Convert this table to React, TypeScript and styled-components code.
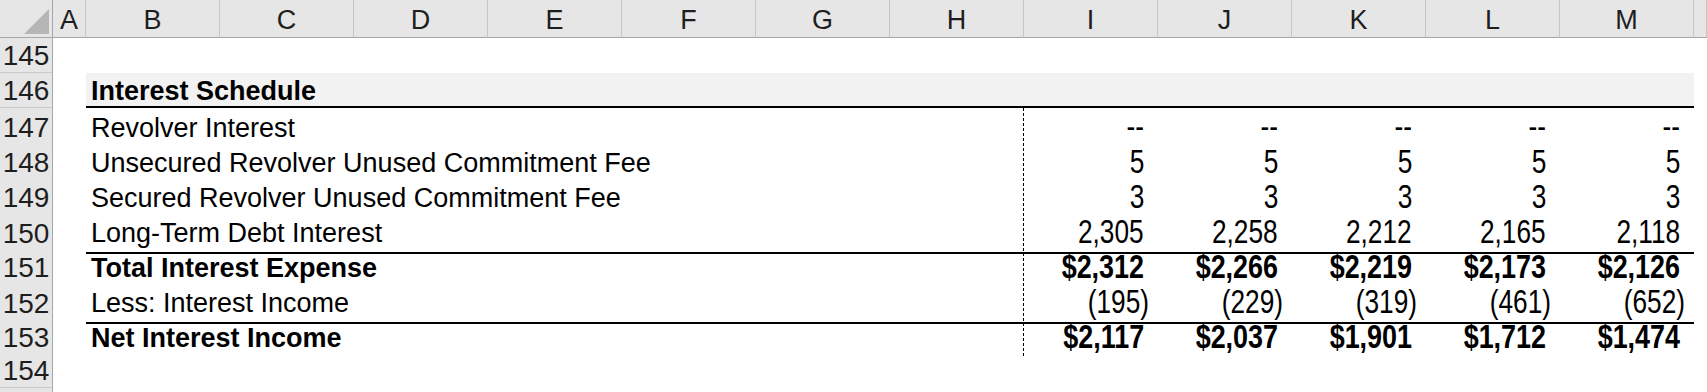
import { FC } from "react";
import styled, { createGlobalStyle } from "styled-components";

const GlobalStyle = createGlobalStyle`
  html, body {
    margin: 0;
    padding: 0;
    background: #ffffff;
    overflow: hidden;
  }
  * {
    box-sizing: border-box;
  }
`;

const COLUMNS = ["A", "B", "C", "D", "E", "F", "G", "H", "I", "J", "K", "L", "M", ""];

type RowData = {
  n: number;
  hideNumber?: boolean;
  label?: string;
  bold?: boolean;
  band?: boolean;
  rule?: boolean;
  values?: string[];
};

const ROWS: RowData[] = [
  { n: 145 },
  { n: 146, label: "Interest Schedule", bold: true, band: true },
  { n: 147, label: "Revolver Interest", values: ["--", "--", "--", "--", "--"] },
  { n: 148, label: "Unsecured Revolver Unused Commitment Fee", values: ["5", "5", "5", "5", "5"] },
  { n: 149, label: "Secured Revolver Unused Commitment Fee", values: ["3", "3", "3", "3", "3"] },
  { n: 150, label: "Long-Term Debt Interest", rule: true, values: ["2,305", "2,258", "2,212", "2,165", "2,118"] },
  { n: 151, label: "Total Interest Expense", bold: true, values: ["$2,312", "$2,266", "$2,219", "$2,173", "$2,126"] },
  { n: 152, label: "Less: Interest Income", rule: true, values: ["(195)", "(229)", "(319)", "(461)", "(652)"] },
  { n: 153, label: "Net Interest Income", bold: true, values: ["$2,117", "$2,037", "$1,901", "$1,712", "$1,474"] },
  { n: 154 },
  { n: 155, hideNumber: true },
];

const Sheet = styled.div`
  width: 1707px;
  height: 392px;
  overflow: hidden;
  display: flex;
  flex-direction: column;
  background: #ffffff;
  font-family: "Liberation Sans", Arial, sans-serif;
  color: #000000;
`;

const GridRow = styled.div<{ $h: number }>`
  display: grid;
  grid-template-columns: 53px 33px repeat(12, 134px) 1fr;
  height: ${(p) => p.$h}px;
  flex: none;
`;

const Corner = styled.div`
  background: #e6e6e6;
  border-right: 1px solid #a6a6a6;
  border-bottom: 1px solid #a6a6a6;
  display: flex;
  align-items: flex-end;
  justify-content: flex-end;
  padding: 0 3px 3px 0;
`;

const CornerMark = styled.div`
  width: 0;
  height: 0;
  border-left: 25px solid transparent;
  border-bottom: 25px solid #b6b6b6;
`;

const ColHeader = styled.div`
  background: #e6e6e6;
  border-right: 1px solid #c6c6c6;
  border-bottom: 1px solid #a6a6a6;
  display: flex;
  align-items: center;
  justify-content: center;
  font-size: 27px;
  color: #1e1e1e;
  padding-top: 3px;
`;

const RowHeader = styled.div`
  background: #e6e6e6;
  border-right: 1px solid #a6a6a6;
  border-bottom: 1px solid #c9c9c9;
  display: flex;
  align-items: center;
  justify-content: center;
  font-size: 28px;
  color: #1e1e1e;
  padding-top: 2px;
`;

const Blank = styled.div``;

const Body = styled.div<{ $band?: boolean; $rule?: boolean }>`
  grid-column: 3 / 15;
  display: grid;
  grid-template-columns: 938px repeat(5, 134px);
  background: ${(p) => (p.$band ? "#f2f2f2" : "transparent")};
  border-bottom: ${(p) => (p.$band || p.$rule ? "2px solid #000000" : "none")};
`;

const Label = styled.div<{ $bold?: boolean; $divider?: boolean; $band?: boolean }>`
  display: flex;
  align-items: flex-end;
  padding: 0 0 ${(p) => (p.$band ? 0 : 3)}px 5px;
  margin-bottom: ${(p) => (p.$band ? -1 : 0)}px;
  font-size: 27px;
  font-weight: ${(p) => (p.$bold ? 700 : 400)};
  white-space: nowrap;
  background-image: ${(p) =>
    p.$divider
      ? "repeating-linear-gradient(to bottom, #000 0 3px, transparent 3px 5px)"
      : "none"};
  background-size: 1px 100%;
  background-position: right top;
  background-repeat: no-repeat;
`;

const Value = styled.div<{ $bold?: boolean }>`
  display: flex;
  align-items: flex-end;
  justify-content: flex-end;
  padding: 0 9px 1px 0;
  font-family: "Liberation Sans", Arial, sans-serif;
  font-size: 33px;
  font-weight: ${(p) => (p.$bold ? 700 : 400)};
  white-space: nowrap;
`;

/* no Arial Narrow installed: condense Liberation Sans instead */
const Narrow = styled.span<{ $bold?: boolean }>`
  display: inline-block;
  transform: scaleX(${(p) => (p.$bold ? 0.815 : 0.795)});
  transform-origin: right bottom;
`;

const Pad = styled.span`
  display: inline-block;
  width: 5px;
`;

const Cell: FC<{ value: string; bold?: boolean }> = ({ value, bold }) => {
  const negative = value.endsWith(")");
  return (
    <Value $bold={bold}>
      <Narrow $bold={bold}>{value}</Narrow>
      {!negative && <Pad />}
    </Value>
  );
};

const SheetRow: FC<{ row: RowData }> = ({ row }) => {
  const hasBody = row.label !== undefined;
  return (
    <GridRow $h={35}>
      <RowHeader>{row.hideNumber ? "" : row.n}</RowHeader>
      <Blank />
      {hasBody ? (
        <Body $band={row.band} $rule={row.rule}>
          <Label $bold={row.bold} $band={row.band} $divider={!!row.values}>
            {row.label}
          </Label>
          {row.values?.map((v, i) => (
            <Cell key={i} value={v} bold={row.bold} />
          ))}
        </Body>
      ) : (
        <Body />
      )}
      <Blank />
    </GridRow>
  );
};

const App: FC = () => {
  return (
    <>
      <GlobalStyle />
      <Sheet>
        <GridRow $h={38}>
          <Corner>
            <CornerMark />
          </Corner>
          {COLUMNS.map((c, i) => (
            <ColHeader key={i}>{c}</ColHeader>
          ))}
        </GridRow>
        {ROWS.map((r) => (
          <SheetRow key={r.n} row={r} />
        ))}
      </Sheet>
    </>
  );
};

export default App;
